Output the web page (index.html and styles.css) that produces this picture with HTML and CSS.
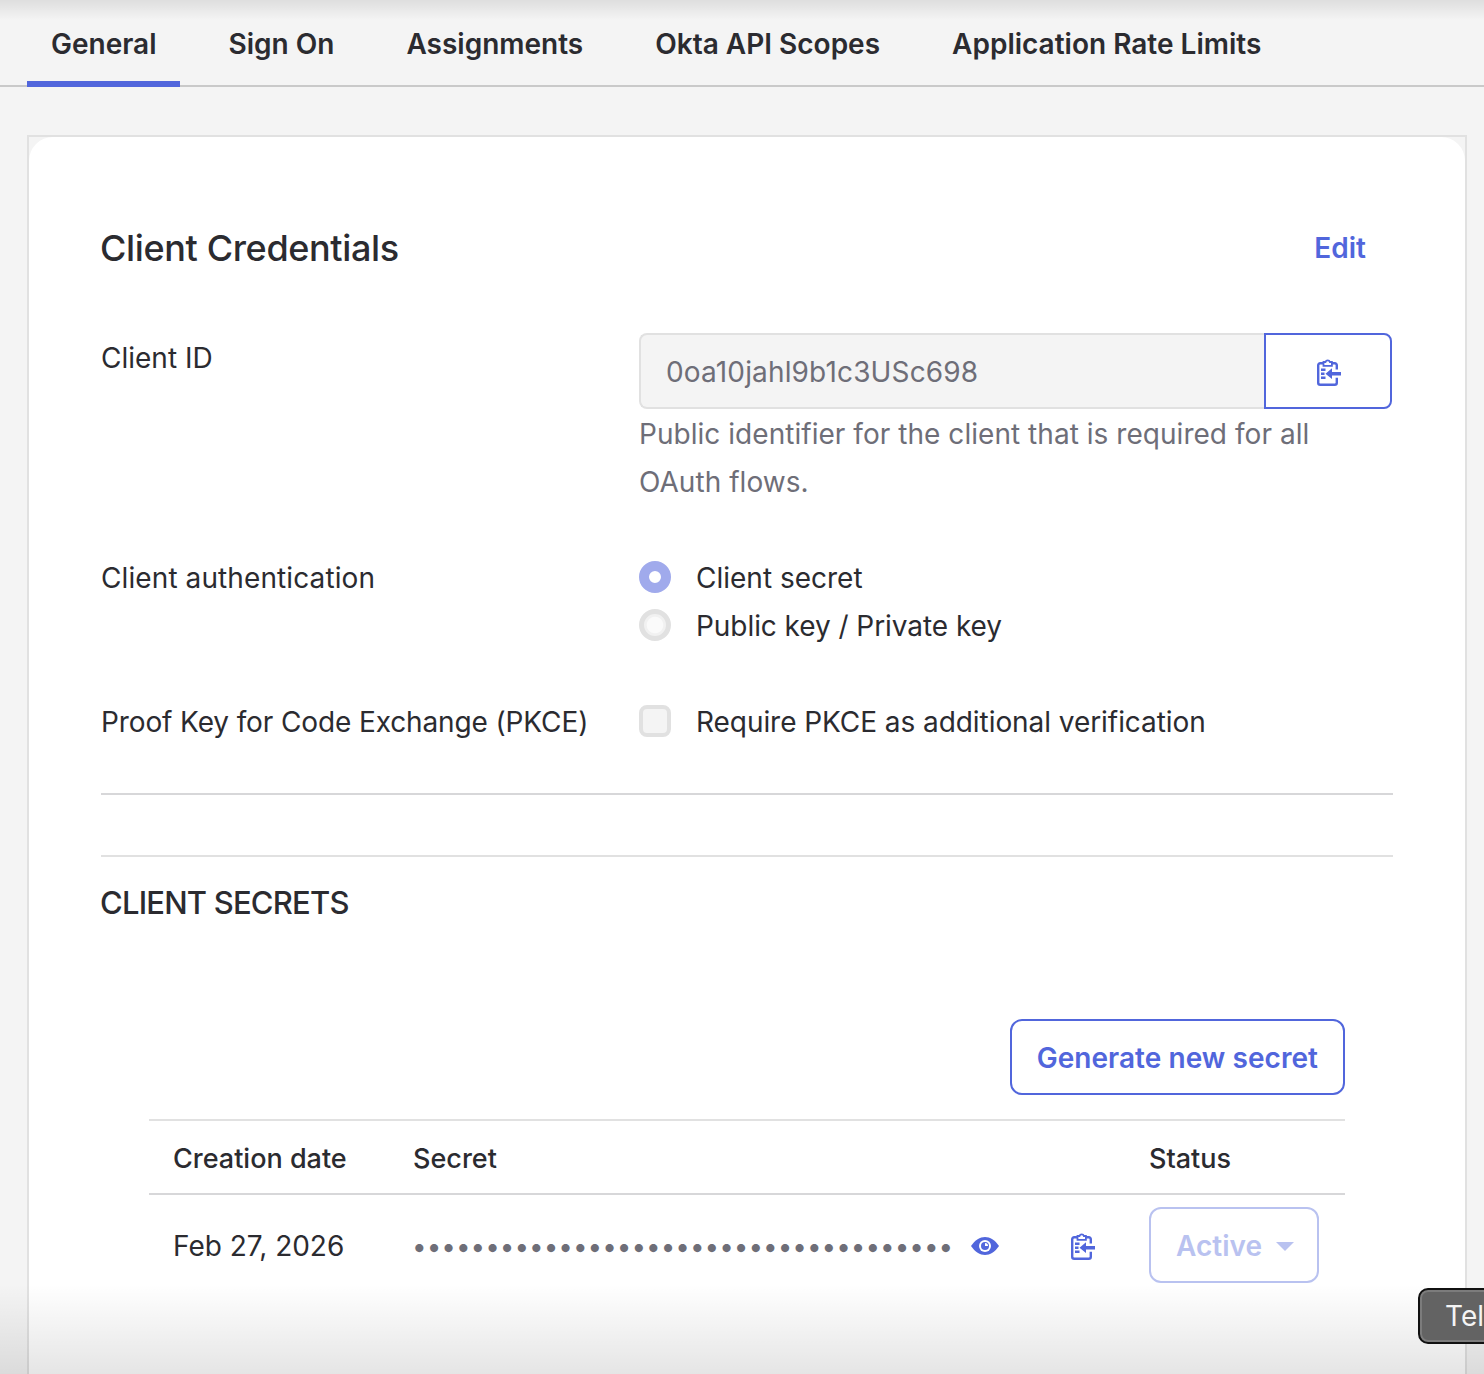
FILE: index.html
```html
<!DOCTYPE html>
<html lang="en">
<head>
    <meta charset="UTF-8">
    <title>Client Credentials</title>
    <link rel="stylesheet" href="styles.css">
</head>
<body>
    <svg class="icon-defs" width="0" height="0">
        <symbol id="clip-icon" viewBox="0 0 24 28">
            <path d="M7 5.200H3.200a2 2 0 0 0-2 2v17.600a2 2 0 0 0 2 2h14.600a2 2 0 0 0 2-2v-5M19.800 11.500V7.200a2 2 0 0 0-2-2H14" fill="none" stroke="currentColor" stroke-width="2.400"/>
            <path d="M6.500 4h2a2.300 2.300 0 0 1 4.400 0h2v3.800H6.500z" fill="none" stroke="currentColor" stroke-width="1.800"/>
            <path d="M4 10.500h4.500v2.400H4zM4 14.500h3.500v2.400H4zM4 18.500h4.500v2.400H4z" fill="currentColor"/>
            <path d="M8.500 15.700l6.500-5.400v3.700h9v3.400h-9v3.700z" fill="currentColor"/>
        </symbol>
    </svg>

    <nav class="tabs">
        <a class="tab active" href="#">General</a>
        <a class="tab" href="#">Sign On</a>
        <a class="tab" href="#">Assignments</a>
        <a class="tab" href="#">Okta API Scopes</a>
        <a class="tab" href="#">Application Rate Limits</a>
    </nav>

    <div class="frame">
        <main class="card">
            <div class="card-head">
                <h1>Client Credentials</h1>
                <a class="edit-link" href="#">Edit</a>
            </div>

            <div class="form-row row-id">
                <div class="form-label">Client ID</div>
                <div class="form-field">
                    <div class="copy-input">
                        <div class="input-value">0oa10jahl9b1c3USc698</div>
                        <button class="copy-button" type="button"><svg class="clip"><use href="#clip-icon"/></svg></button>
                    </div>
                    <p class="help">Public identifier for the client that is required for all OAuth flows.</p>
                </div>
            </div>

            <div class="form-row row-auth">
                <div class="form-label label-auth">Client authentication</div>
                <div class="form-field">
                    <div class="choice"><span class="radio checked"></span>Client secret</div>
                    <div class="choice choice-tight"><span class="radio"></span>Public key / Private key</div>
                </div>
            </div>

            <div class="form-row row-pkce">
                <div class="form-label label-pkce">Proof Key for Code Exchange (PKCE)</div>
                <div class="form-field">
                    <div class="choice choice-tight"><span class="checkbox"></span>Require PKCE as additional verification</div>
                </div>
            </div>

            <hr class="rule rule-first">
            <hr class="rule rule-second">

            <h2>CLIENT SECRETS</h2>

            <div class="secrets">
                <div class="secrets-actions">
                    <button class="outline-button" type="button">Generate new secret</button>
                </div>
                <table class="secrets-table">
                    <thead>
                        <tr>
                            <th class="col-date">Creation date</th>
                            <th class="col-secret">Secret</th>
                            <th class="col-copy"></th>
                            <th class="col-status">Status</th>
                        </tr>
                    </thead>
                    <tbody>
                        <tr>
                            <td>Feb 27, 2026</td>
                            <td>
                                <div class="secret-cell">
                                    <span class="dots">•••••••••••••••••••••••••••••••••••••</span>
                                    <svg class="eye" viewBox="0 0 28 18">
                                        <path d="M0 9C4 3 9 0 14 0s10 3 14 9c-4 6-9 9-14 9S4 15 0 9z" fill="currentColor"/>
                                        <circle cx="14" cy="9" r="6" fill="#fff"/>
                                        <circle cx="14" cy="9" r="4" fill="currentColor"/>
                                        <path d="M14 9h3a3 3 0 0 0-3-3z" fill="#fff"/>
                                    </svg>
                                </div>
                            </td>
                            <td><svg class="clip"><use href="#clip-icon"/></svg></td>
                            <td>
                                <button class="status-button" type="button">Active<span class="caret"></span></button>
                            </td>
                        </tr>
                    </tbody>
                </table>
            </div>
        </main>
    </div>

    <div class="top-shade"></div>
    <div class="bottom-fade"></div>
    <button class="tell-button" type="button">Tel</button>
</body>
</html>
```

FILE: styles.css
```css
html, body {
    margin: 0;
    height: 1374px;
    overflow: hidden;
}

body {
    position: relative;
    font-family: Inter, "Noto Sans", sans-serif;
    font-size: 28px;
    color: #2b2b30;
    background-color: #f4f4f4;
    padding: 0 17px 0 27px;
}

.icon-defs {
    position: absolute;
}

.tabs {
    display: flex;
    gap: 24px;
    height: 85px;
    margin-left: -27px;
    margin-right: -17px;
    padding-left: 27px;
    border-bottom: 2px solid #c9c9c9;
}

.tab {
    height: 87px;
    box-sizing: border-box;
    padding: 26px 24px 0;
    color: #2b2b30;
    font-weight: 600;
    line-height: 36px;
    text-decoration: none;
}

.tab.active {
    border-bottom: 6px solid #5166dc;
}

.frame {
    margin-top: 48px;
    border: 2px solid #e1e1e1;
    border-bottom: none;
}

.card {
    height: 1300px;
    box-sizing: border-box;
    padding: 84px 72px 0;
    background-color: #fff;
    border-radius: 24px 24px 0 0;
}

.card-head {
    display: flex;
    justify-content: space-between;
    align-items: center;
    height: 54px;
    margin-left: -1px;
    padding-right: 27px;
}

h1 {
    margin: 0;
    font-size: 36px;
    font-weight: 500;
    letter-spacing: -0.36px;
}

.edit-link {
    color: #5166dc;
    font-weight: 600;
    text-decoration: none;
}

.form-row {
    display: flex;
    line-height: 48px;
}

.form-label {
    width: 538px;
    flex-shrink: 0;
}

.label-auth {
    letter-spacing: 0.1px;
}

.label-pkce {
    letter-spacing: -0.12px;
}

.form-field {
    flex: 1;
}

.row-id {
    margin-top: 58px;
}

.row-id .form-label {
    padding-top: 1px;
}

.row-auth {
    margin-top: 48px;
}

.row-pkce {
    margin-top: 48px;
}

.copy-input {
    display: flex;
    height: 76px;
    width: 753px;
}

.input-value {
    flex: 1;
    box-sizing: border-box;
    padding: 0 24px 0 25px;
    line-height: 74px;
    letter-spacing: 0.15px;
    color: #6e6e78;
    background-color: #f4f4f4;
    border: 2px solid #e1e1e1;
    border-right: none;
    border-radius: 8px 0 0 8px;
}

.copy-button {
    width: 128px;
    padding: 0 0 0 2px;
    color: #5166dc;
    background-color: #fff;
    border: 2px solid #5166dc;
    border-radius: 0 8px 8px 0;
}

.clip {
    display: block;
    width: 24px;
    height: 28px;
    color: #5166dc;
}

.copy-button .clip {
    margin: 1px auto 0;
}

.help {
    margin: 1px 0 0;
    max-width: 700px;
    letter-spacing: 0.04px;
    color: #6e6e78;
}

.choice {
    display: flex;
    align-items: center;
}

.choice-tight {
    letter-spacing: -0.06px;
}

.radio {
    width: 32px;
    height: 32px;
    box-sizing: border-box;
    margin: -2px 25px 0 0;
    border: 5px solid #e1e1e1;
    border-radius: 50%;
    background: radial-gradient(circle, #fafafa 50%, #f1f1f1 56%);
}

.radio.checked {
    border: 10px solid #a0aaec;
    background: #fff;
}

.checkbox {
    width: 32px;
    height: 32px;
    box-sizing: border-box;
    margin: -2px 25px 0 0;
    border: 4px solid #e1e1e1;
    border-radius: 8px;
    background-color: #f4f4f4;
}

.rule {
    height: 2px;
    margin: 0;
    border: none;
    background-color: #d7d7d9;
}

.rule-first {
    margin-top: 47px;
}

.rule-second {
    margin-top: 60px;
    background-color: #e1e1e1;
}

h2 {
    margin: 26px 0 0 -1px;
    font-size: 31px;
    font-weight: 500;
    line-height: 40px;
    letter-spacing: -0.8px;
}

.secrets {
    margin: 0 48px;
}

.secrets-actions {
    display: flex;
    justify-content: flex-end;
    margin-top: 96px;
}

.outline-button {
    height: 76px;
    padding: 2px 25px 0;
    font-family: inherit;
    font-size: 28px;
    font-weight: 600;
    letter-spacing: 0.05px;
    color: #5166dc;
    background-color: #fff;
    border: 2px solid #5166dc;
    border-radius: 12px;
}

.secrets-table {
    width: 100%;
    margin-top: 24px;
    border-collapse: collapse;
    table-layout: fixed;
    border-top: 2px solid #e1e1e1;
}

.secrets-table th {
    height: 70px;
    padding: 2px 0 0 24px;
    font-size: 27px;
    font-weight: 500;
    text-align: left;
    border-bottom: 2px solid #d7d7d9;
}

.secrets-table td {
    height: 102px;
    padding: 0 0 0 24px;
    color: #2b2b30;
    vertical-align: middle;
}

.col-date {
    width: 216px;
}

.col-secret {
    width: 616px;
}

.col-copy {
    width: 96px;
}

.secrets-table .col-status {
    padding-left: 0;
}

.secrets-table td:last-child {
    padding-left: 0;
}

.secrets-table td:nth-child(3) {
    padding-left: 42px;
}

.secret-cell {
    display: flex;
    align-items: center;
}

.dots {
    width: 559px;
    margin-left: -1px;
    color: #6e6e78;
    font-size: 26px;
    letter-spacing: 0;
    white-space: nowrap;
}

.eye {
    width: 28px;
    height: 18px;
    color: #5166dc;
}

.status-button {
    display: flex;
    align-items: center;
    width: 170px;
    height: 76px;
    margin-top: -2px;
    padding: 2px 0 0 25px;
    font-family: inherit;
    font-size: 28px;
    font-weight: 600;
    color: #b9c2f0;
    background-color: #fff;
    border: 2px solid #b9c2f0;
    border-radius: 12px;
}

.caret {
    width: 0;
    height: 0;
    margin-left: 14px;
    border-left: 9px solid transparent;
    border-right: 9px solid transparent;
    border-top: 9px solid #b9c2f0;
}

.top-shade {
    position: absolute;
    top: 0;
    left: 0;
    right: 0;
    height: 20px;
    background: linear-gradient(rgba(0, 0, 0, 0.09), rgba(0, 0, 0, 0));
}

.bottom-fade {
    position: absolute;
    left: 0;
    right: 0;
    bottom: 0;
    height: 90px;
    background: linear-gradient(rgba(0, 0, 0, 0), rgba(0, 0, 0, 0.1));
}

.tell-button {
    position: absolute;
    top: 1288px;
    left: 1418px;
    width: 120px;
    height: 56px;
    padding: 0 0 0 25px;
    font-family: inherit;
    font-size: 28px;
    text-align: left;
    white-space: nowrap;
    color: #f4f4f4;
    background-color: #636363;
    border: 2px solid #111;
    border-radius: 10px;
    box-shadow: inset 0 0 0 2px #7c7c7c;
}
```
